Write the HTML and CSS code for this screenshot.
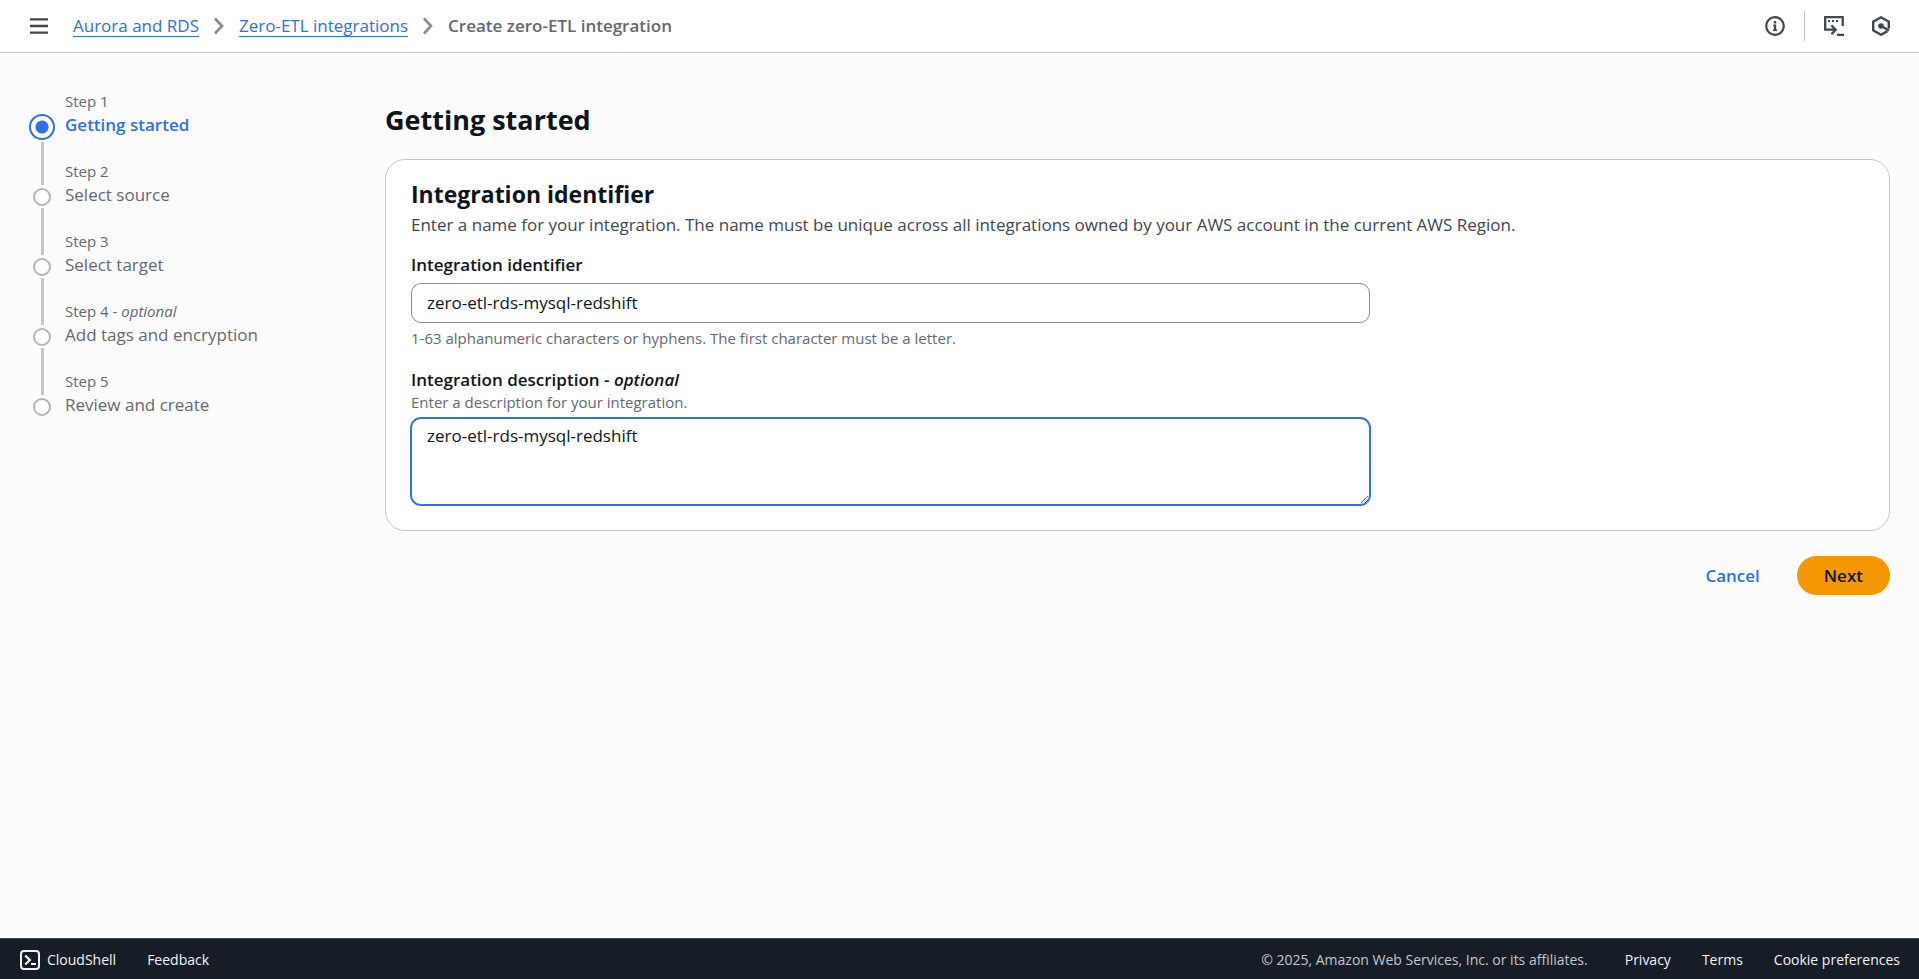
FILE: index.html
```html
<!DOCTYPE html>
<html lang="en">
<head>
<meta charset="utf-8">
<title>Create zero-ETL integration</title>
<link rel="stylesheet" href="styles.css">
</head>
<body>
<header class="topbar">
  <button class="icon-button menu" type="button" aria-label="Open navigation">
    <svg width="20" height="20" viewBox="0 0 20 20" fill="none" stroke="currentColor" stroke-width="2.4"><path d="M1 3.4h18M1 10h18M1 16.6h18"/></svg>
  </button>
  <nav class="breadcrumbs" aria-label="Breadcrumbs">
    <a href="#">Aurora and RDS</a>
    <svg class="chevron" width="12" height="18" viewBox="0 0 12 18" fill="none" stroke="currentColor" stroke-width="2.7"><path d="M2 1.5l7 7.5-7 7.5"/></svg>
    <a href="#">Zero-ETL integrations</a>
    <svg class="chevron" width="12" height="18" viewBox="0 0 12 18" fill="none" stroke="currentColor" stroke-width="2.7"><path d="M2 1.5l7 7.5-7 7.5"/></svg>
    <span class="current">Create zero-ETL integration</span>
  </nav>
  <div class="tools">
    <button class="icon-button info" type="button" aria-label="Info">
      <svg width="20" height="20" viewBox="0 0 20 20" fill="none" stroke="currentColor" stroke-width="2.2"><circle cx="10" cy="10" r="8.8"/><path d="M10 5v2.4M10 8.6v6" stroke-width="2.4"/><path d="M8.2 9.4h2M8 14.2h4" stroke-width="1.4"/></svg>
    </button>
    <button class="icon-button" type="button" aria-label="CloudShell panel">
      <svg width="20" height="20" viewBox="0 0 20 20" fill="none" stroke="currentColor" stroke-width="2.3"><path d="M5.5 13.7H1.2V1.2h17.5v8.7"/><path d="M4 5.1h2M8 5.1h2M12 5.1h2" stroke-width="2"/><path d="M5 13.7h6M7.4 9.2l4.3 4.5-4.3 4.6M13 18.8h7"/></svg>
    </button>
    <button class="icon-button" type="button" aria-label="Amazon Q">
      <svg width="20" height="20" viewBox="0 0 20 20" fill="none" stroke="currentColor" stroke-width="2.4"><path d="M17.8 12.4V5.6L10 1.3 2.2 5.6v8.8l7.8 4.3 6.5-3.6"/><circle cx="10" cy="10" r="2.8" fill="currentColor" stroke="none"/><path d="M10 10l8 4.4"/></svg>
    </button>
  </div>
</header>

<div class="page">
  <nav class="steps" aria-label="Steps">
    <ol>
      <li class="step active"><span class="marker"></span><div class="step-text"><small>Step 1</small><strong>Getting started</strong></div></li>
      <li class="step"><span class="marker"></span><div class="step-text"><small>Step 2</small><span>Select source</span></div></li>
      <li class="step"><span class="marker"></span><div class="step-text"><small>Step 3</small><span>Select target</span></div></li>
      <li class="step"><span class="marker"></span><div class="step-text"><small>Step 4 - <i>optional</i></small><span>Add tags and encryption</span></div></li>
      <li class="step"><span class="marker"></span><div class="step-text"><small>Step 5</small><span>Review and create</span></div></li>
    </ol>
  </nav>
  <main class="content">
    <h1>Getting started</h1>
    <form>
      <section class="card">
        <h2>Integration identifier</h2>
        <p class="lead">Enter a name for your integration. The name must be unique across all integrations owned by your AWS account in the current AWS Region.</p>
        <div class="field">
          <label for="identifier">Integration identifier</label>
          <input id="identifier" type="text" value="zero-etl-rds-mysql-redshift">
          <p class="hint constraint">1-63 alphanumeric characters or hyphens. The first character must be a letter.</p>
        </div>
        <div class="field">
          <label for="description">Integration description - <i>optional</i></label>
          <p class="hint">Enter a description for your integration.</p>
          <textarea id="description" rows="3">zero-etl-rds-mysql-redshift</textarea>
        </div>
      </section>
      <div class="actions">
        <button class="cancel" type="button">Cancel</button>
        <button class="next" type="button">Next</button>
      </div>
    </form>
  </main>
</div>

<footer class="footer">
  <button class="footer-link shell" type="button">
    <svg width="20" height="20" viewBox="0 0 20 20" fill="none" stroke="currentColor" stroke-width="2"><rect x="1" y="1" width="18" height="18" rx="3"/><path d="M5.2 5.5l4.6 4.5-4.6 4.5" stroke-width="2.3"/><path d="M11 14h5"/></svg>
    CloudShell
  </button>
  <a class="footer-link" href="#">Feedback</a>
  <span class="copyright">© 2025, Amazon Web Services, Inc. or its affiliates.</span>
  <a class="footer-link" href="#">Privacy</a>
  <a class="footer-link" href="#">Terms</a>
  <a class="footer-link" href="#">Cookie preferences</a>
</footer>
</body>
</html>
```
FILE: styles.css
```css
* { box-sizing: border-box; }

body {
  margin: 0;
  min-height: 100vh;
  display: flex;
  flex-direction: column;
  background: #fcfcfd;
  color: #0f141a;
  font: 17px/24px "Open Sans", "Noto Sans", sans-serif;
}

button, input, textarea { font: inherit; color: inherit; }
button { cursor: pointer; }
h1, h2, p, ol { margin: 0; padding: 0; }
strong, label { font-weight: 600; }
h1, h2 { font-weight: 700; }
svg { display: block; flex: none; }

.topbar {
  display: flex;
  align-items: center;
  height: 53px;
  padding: 0 28px 0 29px;
  background: #fff;
  border-bottom: 1px solid #c6c6cd;
}
.icon-button {
  display: flex;
  padding: 0;
  border: 0;
  background: none;
  color: #424650;
}
.breadcrumbs {
  display: flex;
  align-items: center;
  gap: 14px;
  margin-left: 24px;
}
.breadcrumbs a {
  color: #306fe5;
  text-decoration: underline;
  text-decoration-thickness: 1px;
  text-underline-offset: 4px;
}
.chevron { color: #8c8c94; }
.current { font-weight: 600; color: #656871; }
.tools {
  display: flex;
  align-items: center;
  gap: 27px;
  margin-left: auto;
}
.info {
  height: 30px;
  align-items: center;
  padding-right: 19px;
  margin-right: -8px;
  border-right: 1px solid #c6c6cd;
}

.page {
  flex: 1;
  display: flex;
  padding: 38px 29px 40px;
}
.steps { flex: 0 0 356px; }
.steps ol { list-style: none; }
.step {
  position: relative;
  display: flex;
  gap: 10px;
  height: 70px;
  color: #656871;
}
.step-text { display: flex; flex-direction: column; line-height: 28px; }
.step-text small { font-size: 15px; line-height: 20px; }
.active strong { color: #306fe5; }
.marker {
  flex: none;
  width: 18px;
  height: 18px;
  margin: 27px 4px 0 4px;
  border: 2px solid #b4b4bb;
  border-radius: 50%;
  background: #fff;
}
.active .marker {
  width: 26px;
  height: 26px;
  margin: 23px 0 0;
  border-color: #306fe5;
  background: radial-gradient(circle, #306fe5 6px, #fff 7px);
}
.step:not(:last-child)::after {
  content: "";
  position: absolute;
  left: 12px;
  top: 47px;
  width: 3px;
  height: 47px;
  background: #c6c6cd;
}
.step.active::after { top: 51px; height: 43px; }

.content { flex: 1; min-width: 0; }
h1 { padding: 11px 0 21px; font-size: 27px; line-height: 36px; }
.card {
  padding: 19px 25px 25px;
  border: 1px solid #c6c6cd;
  border-radius: 20px;
  background: #fff;
}
h2 { font-size: 23px; line-height: 30px; }
.lead { padding-top: 1px; color: #424650; line-height: 30px; }
.field {
  display: flex;
  flex-direction: column;
  width: 66%;
  margin-top: 13px;
}
.field + .field { margin-top: 20px; }
.field label { line-height: 24px; }
.hint { font-size: 15px; line-height: 20px; color: #656871; }
.constraint { margin-top: 5px; }
.field input {
  width: 100%;
  height: 40px;
  margin-top: 6px;
  padding: 0 15px 2px;
  border: 1px solid #8c8c94;
  border-radius: 10px;
  background: #fff;
}
.field textarea {
  display: block;
  height: 87px;
  margin-top: 6px;
  padding: 5px 15px;
  border: 1px solid #306fe5;
  border-radius: 10px;
  outline: 0;
  box-shadow: 0 0 0 1px #306fe5;
  background: #fff;
  resize: both;
}

.actions {
  display: flex;
  justify-content: flex-end;
  gap: 10px;
  margin-top: 25px;
}
.actions button {
  height: 39px;
  padding: 0 27px;
  border: 0;
  border-radius: 20px;
  font-weight: 600;
}
.cancel { background: none; color: #306fe5; }
.next { background: #f59700; }

.footer {
  display: flex;
  align-items: center;
  gap: 31px;
  height: 41px;
  padding: 1px 19px 0 20px;
  border-top: 1px solid #424650;
  background: #161d26;
  font-size: 14px;
  font-weight: 500;
  line-height: 20px;
}
.footer-link {
  padding: 0;
  border: 0;
  background: none;
  color: #f3f3f7;
  text-decoration: none;
}
.shell { display: flex; align-items: center; gap: 7px; }
.copyright { margin: 0 6px 0 auto; color: #c6c6cd; }
```
